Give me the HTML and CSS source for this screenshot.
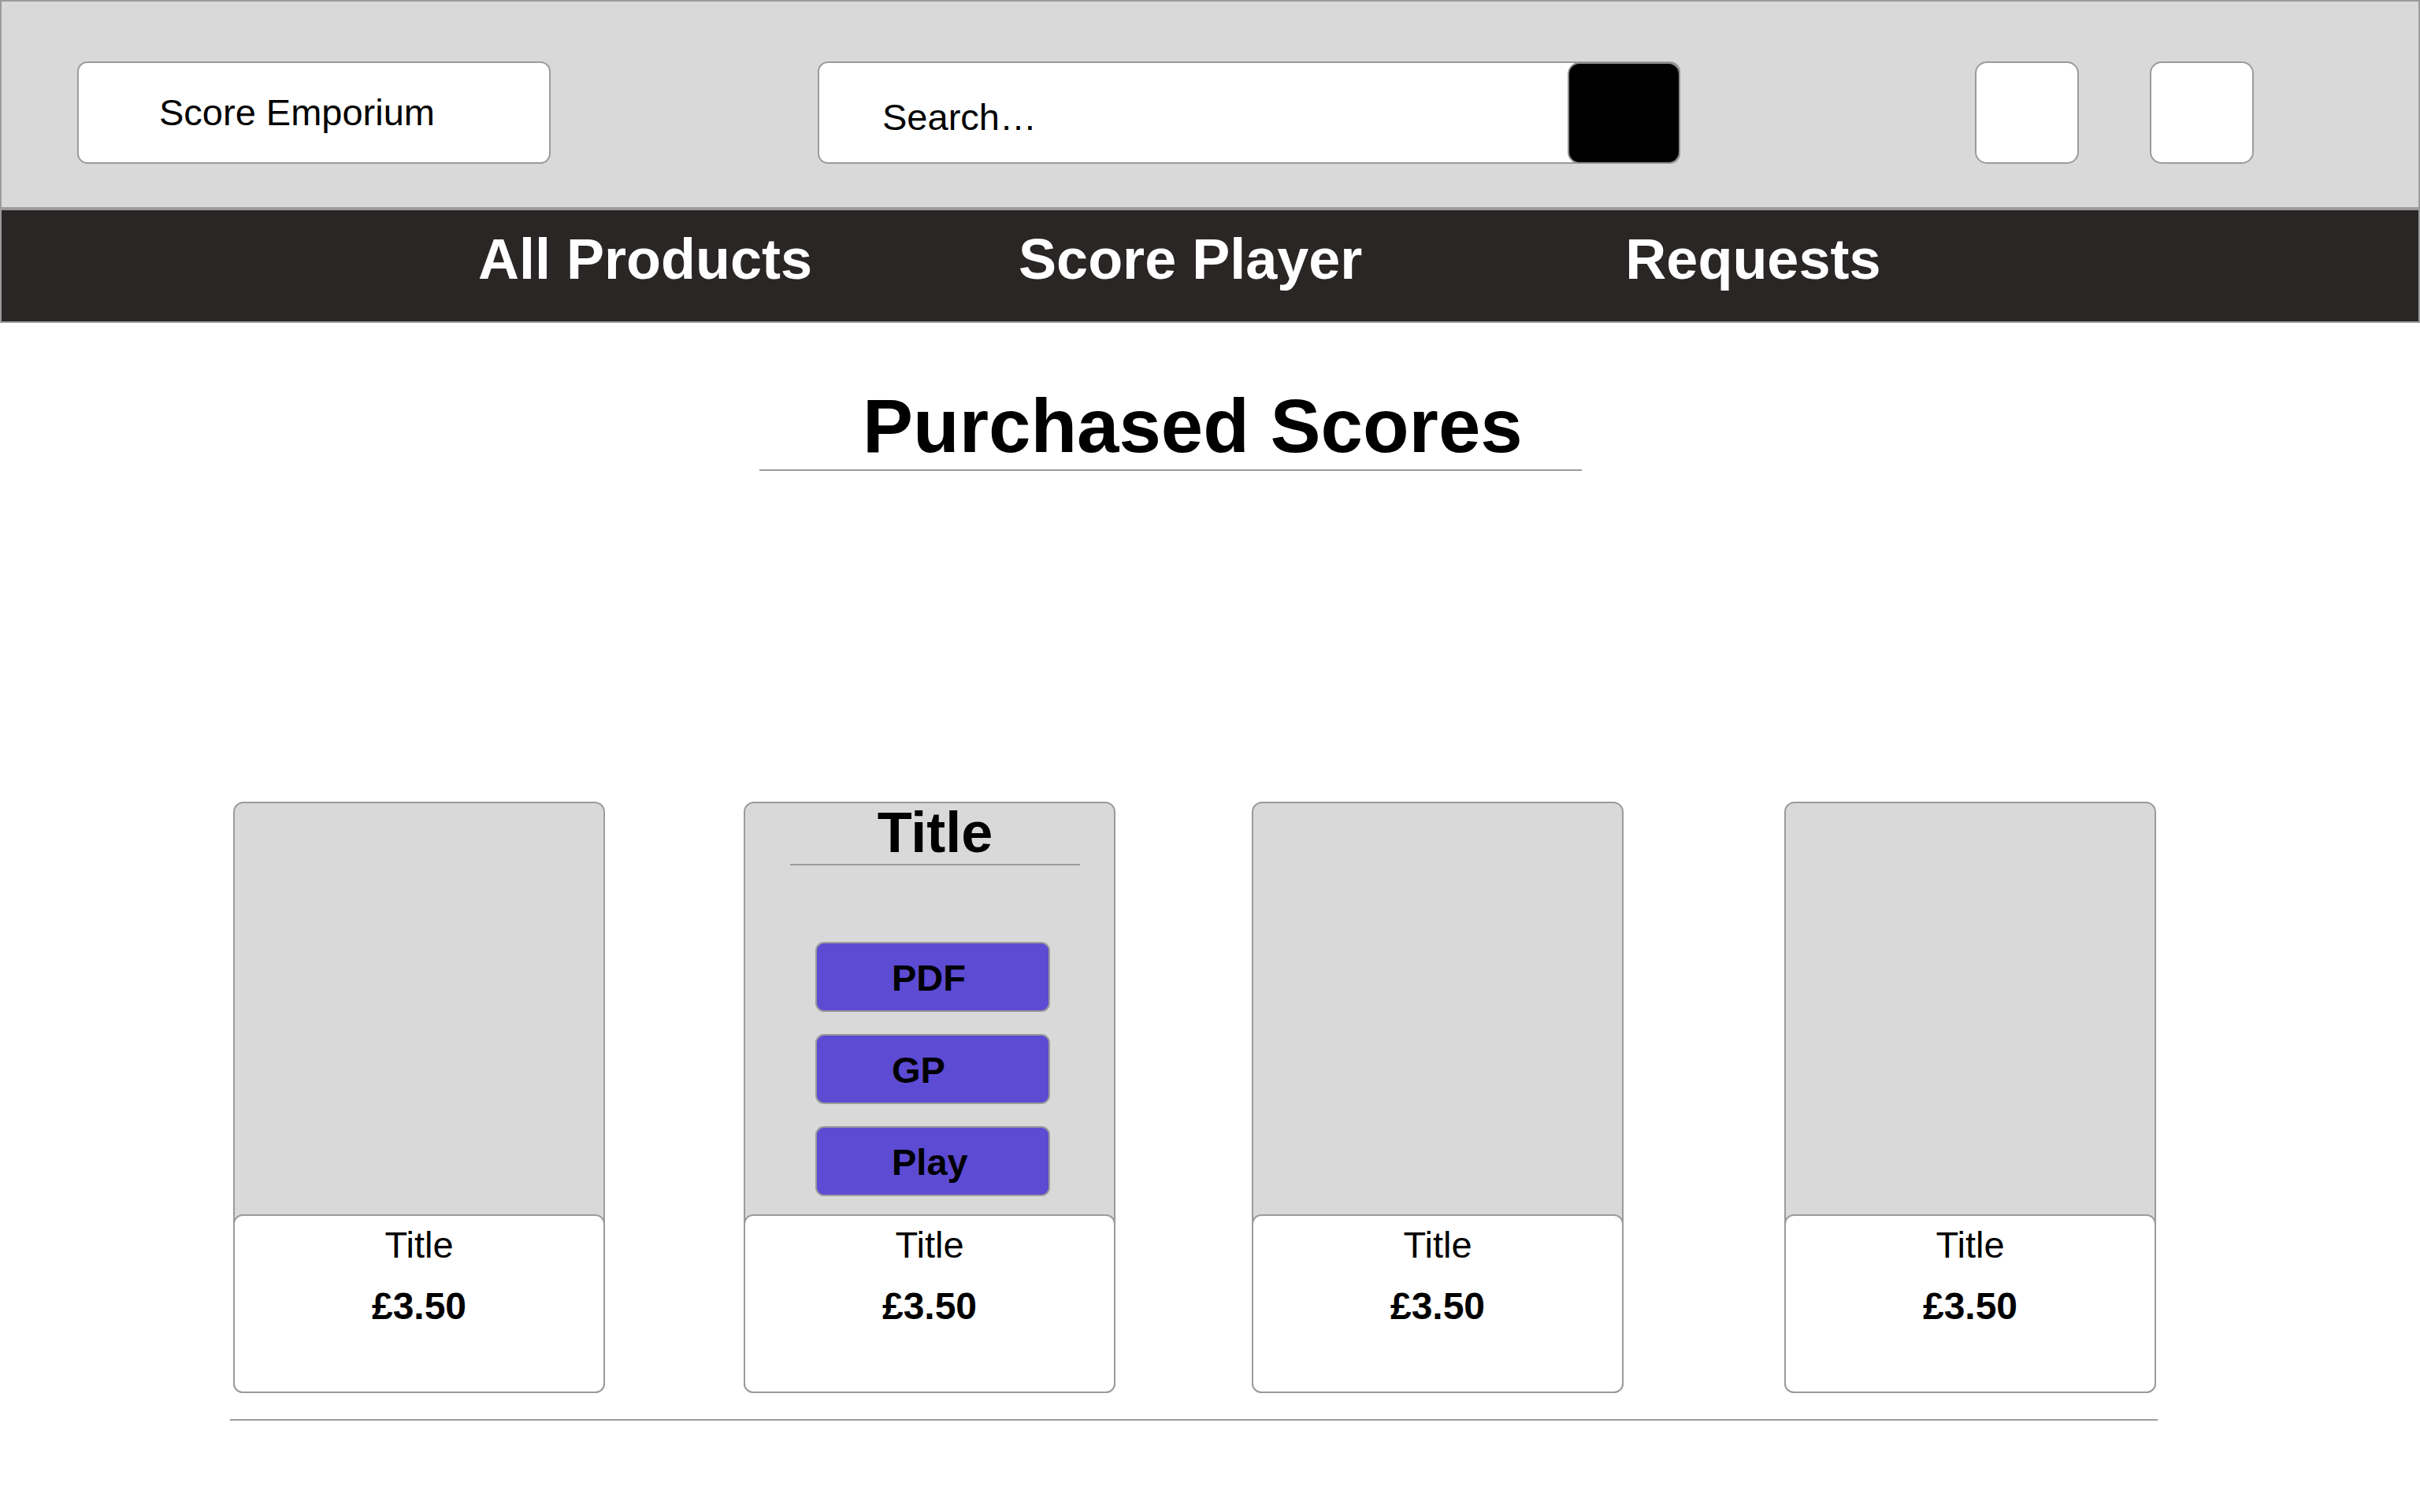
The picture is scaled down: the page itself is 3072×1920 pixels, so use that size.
FILE: index.html
```html
<!DOCTYPE html>
<html lang="en">
<head>
<meta charset="utf-8">
<title>Score Emporium – Purchased Scores</title>
<link rel="stylesheet" href="styles.css">
</head>
<body>
  <header class="topbar">
    <div class="logo-box"><span class="logo-text">Score Emporium</span></div>
    <div class="search">
      <span class="search-text">Search…</span>
      <button class="search-btn" aria-label="Search"></button>
    </div>
    <button class="icon-btn icon-btn-first" aria-label="Account"></button>
    <button class="icon-btn icon-btn-second" aria-label="Basket"></button>
  </header>
  <nav class="navbar">
    <a class="nav-link">All Products</a>
    <a class="nav-link nav-link-player">Score Player</a>
    <a class="nav-link nav-link-requests">Requests</a>
  </nav>

  <main class="content">
    <h1 class="page-title">Purchased Scores</h1>

    <section class="cards">
      <article class="card">
        <div class="card-cover"></div>
        <div class="card-info">
          <div class="card-title">Title</div>
          <div class="card-price">£3.50</div>
        </div>
      </article>

      <article class="card">
        <div class="card-cover">
          <div class="cover-title">Title</div>
          <div class="cover-actions">
            <button class="action-btn">PDF</button>
            <button class="action-btn">GP</button>
            <button class="action-btn">Play</button>
          </div>
        </div>
        <div class="card-info">
          <div class="card-title">Title</div>
          <div class="card-price">£3.50</div>
        </div>
      </article>

      <article class="card card-third">
        <div class="card-cover"></div>
        <div class="card-info">
          <div class="card-title">Title</div>
          <div class="card-price">£3.50</div>
        </div>
      </article>

      <article class="card card-last">
        <div class="card-cover"></div>
        <div class="card-info">
          <div class="card-title">Title</div>
          <div class="card-price">£3.50</div>
        </div>
      </article>
    </section>

    <hr class="bottom-rule">
  </main>
</body>
</html>
```

FILE: styles.css
```css
* {
  box-sizing: border-box;
}

html, body {
  margin: 0;
  padding: 0;
  background: #ffffff;
}

body {
  font-family: "Liberation Sans", Arial, Helvetica, sans-serif;
  color: #000;
  width: 3072px;
}

button {
  font-family: inherit;
  padding: 0;
  cursor: pointer;
}

/* ---------- top bar ---------- */
.topbar {
  height: 265px;
  background: #d9d9d9;
  border: 2px solid #9b9b9b;
  display: flex;
  align-items: flex-start;
  padding: 76px 0 0 96px;
}

.logo-box {
  width: 601px;
  height: 130px;
  background: #fff;
  border: 2px solid #9b9b9b;
  border-radius: 13px;
  display: flex;
  align-items: center;
  padding-left: 102px;
  padding-bottom: 1px;
}

.logo-text {
  font-size: 47px;
  line-height: 1;
}

.search {
  margin-left: 339px;
  width: 1095px;
  height: 130px;
  background: #fff;
  border: 2px solid #9b9b9b;
  border-radius: 13px;
  display: flex;
  align-items: stretch;
}

.search-text {
  flex: 1;
  display: flex;
  align-items: center;
  padding-left: 80px;
  padding-top: 10px;
  font-size: 47px;
  line-height: 1;
}

.search-btn {
  width: 143px;
  margin: -1px -2px -2px 0;
  background: #000;
  border: 2px solid #8f8f8f;
  border-radius: 15px;
}

.icon-btn {
  width: 132px;
  height: 130px;
  background: #fff;
  border: 2px solid #9b9b9b;
  border-radius: 15px;
}

.icon-btn-first {
  margin-left: 374px;
}

.icon-btn-second {
  margin-left: 90px;
}

/* ---------- nav ---------- */
.navbar {
  height: 145px;
  background: #2a2625;
  border: 2px solid #9b9b9b;
  display: flex;
  align-items: flex-start;
  padding: 26px 0 0 605px;
}

.nav-link {
  color: #fff;
  font-weight: 700;
  font-size: 72px;
  line-height: 72px;
  text-decoration: none;
  white-space: nowrap;
}

.nav-link-player {
  margin-left: 262px;
}

.nav-link-requests {
  margin-left: 334px;
}

/* ---------- content ---------- */
.content {
  display: flex;
  flex-direction: column;
  align-items: flex-start;
}

.page-title {
  margin: 76px 0 0 964px;
  width: 1044px;
  padding-left: 131px;
  font-size: 96px;
  font-weight: 700;
  line-height: 110px;
  border-bottom: 2px solid #9b9b9b;
  white-space: nowrap;
}

.cards {
  margin: 420px 0 0 296px;
  display: flex;
  gap: 176px;
}

.card {
  width: 472px;
  height: 751px;
  background: #d9d9d9;
  border: 2px solid #9b9b9b;
  border-radius: 13px;
  display: flex;
  flex-direction: column;
}

.card-third {
  margin-left: -3px;
}

.card-last {
  margin-left: 28px;
}

.card-cover {
  flex: 1;
  padding-top: 1px;
}

.cover-title {
  margin-left: 57px;
  width: 368px;
  text-align: center;
  font-size: 72px;
  font-weight: 700;
  line-height: 72px;
  padding-bottom: 4px;
  border-bottom: 2px solid #9b9b9b;
}

.cover-actions {
  margin: 97px 0 0 89px;
  display: flex;
  flex-direction: column;
  gap: 28px;
}

.action-btn {
  width: 298px;
  height: 89px;
  background: #5d4bd4;
  border: 2px solid #9b9b9b;
  border-radius: 11px;
  color: #000;
  font-size: 47px;
  font-weight: 700;
  line-height: 1;
  text-align: left;
  padding-left: 95px;
  padding-top: 2px;
}

.card-info {
  height: 227px;
  margin: 0 -2px -2px;
  background: #fff;
  border: 2px solid #9b9b9b;
  border-radius: 12px;
  padding-top: 10px;
  text-align: center;
}

.card-title {
  font-size: 47px;
  line-height: 54px;
}

.card-price {
  margin-top: 24px;
  font-size: 48px;
  font-weight: 700;
  line-height: 54px;
}

.bottom-rule {
  margin: 33px 0 0 292px;
  width: 2447px;
  height: 0;
  border: 0;
  border-top: 2px solid #9b9b9b;
}
```
